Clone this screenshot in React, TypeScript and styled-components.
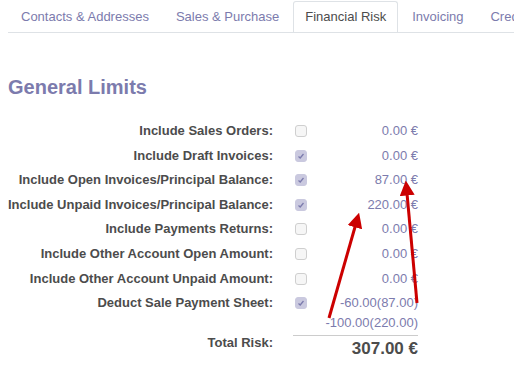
import styled, { createGlobalStyle } from "styled-components";

const Global = createGlobalStyle`
  body {
    margin: 0;
    background: #ffffff;
    font-family: "Liberation Sans", Arial, sans-serif;
    font-size: 13px;
    color: #4c4c4c;
  }
`;

const Page = styled.div`
  position: relative;
  width: 514px;
  height: 386px;
  overflow: hidden;
`;

const Tabs = styled.div`
  display: flex;
  margin-left: 8px;
  height: 31px;
  padding-top: 1px;
  border-bottom: 1px solid #dee2e6;
  white-space: nowrap;
  overflow: hidden;
`;

const Tab = styled.div<{ active?: boolean }>`
  padding: 0 ${(p) => (p.active ? "11px" : "12px")};
  margin-right: 1px;
  line-height: 30px;
  color: ${(p) => (p.active ? "#4c4c4c" : "#7c7bad")};
  background: #ffffff;
  border: 1px solid ${(p) => (p.active ? "#dee2e6" : "transparent")};
  border-bottom: none;
  border-radius: 3px 3px 0 0;
  height: 31px;
  box-sizing: border-box;
`;

const Title = styled.h2`
  margin: 42px 0 0 8px;
  font-size: 20px;
  font-weight: bold;
  color: #7c7bad;
  line-height: 24px;
`;

const Form = styled.div`
  display: grid;
  grid-template-columns: 265px 125px;
  column-gap: 20px;
  margin: 20px 0 0 8px;
`;

const Label = styled.div<{ total?: boolean }>`
  font-weight: bold;
  text-align: right;
  white-space: nowrap;
  line-height: ${(p) => (p.total ? "20px" : "24.6px")};
`;

const Field = styled.div<{ total?: boolean }>`
  display: flex;
  align-items: flex-start;
  justify-content: space-between;
  line-height: 24.6px;
  color: #7c7bad;
  ${(p) =>
    p.total &&
    `
    border-top: 1px solid #cccccc;
    margin-top: 2px;
    padding-top: 1px;
    justify-content: flex-end;
    color: #4c4c4c;
    font-size: 17px;
    font-weight: bold;
    line-height: 24px;
  `}
`;

const Box = styled.span<{ checked?: boolean }>`
  display: inline-flex;
  align-items: center;
  justify-content: center;
  width: 12px;
  height: 12px;
  margin-top: 6px;
  margin-left: 2px;
  border-radius: 3px;
  box-sizing: border-box;
  background: ${(p) => (p.checked ? "#cac9df" : "#f6f6f6")};
  border: 1px solid ${(p) => (p.checked ? "#cac9df" : "#cfcfcf")};
`;

const Values = styled.div`
  text-align: right;
  line-height: 20px;
  padding-top: 2px;
`;

const Arrows = styled.svg`
  position: absolute;
  left: 0;
  top: 0;
  pointer-events: none;
`;

type Row = { label: string; checked: boolean; value: string[] };

const rows: Row[] = [
  { label: "Include Sales Orders:", checked: false, value: ["0.00 €"] },
  { label: "Include Draft Invoices:", checked: true, value: ["0.00 €"] },
  { label: "Include Open Invoices/Principal Balance:", checked: true, value: ["87.00 €"] },
  { label: "Include Unpaid Invoices/Principal Balance:", checked: true, value: ["220.00 €"] },
  { label: "Include Payments Returns:", checked: false, value: ["0.00 €"] },
  { label: "Include Other Account Open Amount:", checked: false, value: ["0.00 €"] },
  { label: "Include Other Account Unpaid Amount:", checked: false, value: ["0.00 €"] },
  {
    label: "Deduct Sale Payment Sheet:",
    checked: true,
    value: ["-60.00(87.00)", "-100.00(220.00)"],
  },
];

const Check = ({ checked }: { checked: boolean }) => (
  <Box checked={checked}>
    {checked && (
      <svg width="8" height="8" viewBox="0 0 8 8">
        <path d="M1.5 4.5 L3.2 6 L6.5 2" stroke="#7c7bad" strokeWidth="1.3" fill="none" />
      </svg>
    )}
  </Box>
);

export default function App() {
  return (
    <Page>
      <Global />
      <Tabs>
        <Tab>Contacts &amp; Addresses</Tab>
        <Tab>Sales &amp; Purchase</Tab>
        <Tab active>Financial Risk</Tab>
        <Tab>Invoicing</Tab>
        <Tab>Credit Control</Tab>
      </Tabs>
      <Title>General Limits</Title>
      <Form>
        {rows.map((r) => (
          <>
            <Label key={r.label}>{r.label}</Label>
            <Field key={r.label + "f"}>
              <Check checked={r.checked} />
              {r.value.length > 1 ? (
                <Values>
                  {r.value.map((v) => (
                    <div key={v}>{v}</div>
                  ))}
                </Values>
              ) : (
                <span>{r.value[0]}</span>
              )}
            </Field>
          </>
        ))}
        <Label total>Total Risk:</Label>
        <Field total>307.00 €</Field>
      </Form>
      <Arrows width="514" height="386" viewBox="0 0 514 386">
        <defs>
          <marker id="head" markerWidth="5" markerHeight="5" refX="2.5" refY="2.5" orient="auto">
            <path d="M0 0 L5 2.5 L0 5 Z" fill="#cc0000" />
          </marker>
        </defs>
        <line x1="417" y1="303" x2="406.5" y2="188" stroke="#cc0000" strokeWidth="3" markerEnd="url(#head)" />
        <line x1="329" y1="318" x2="357" y2="220" stroke="#cc0000" strokeWidth="3" markerEnd="url(#head)" />
      </Arrows>
    </Page>
  );
}
